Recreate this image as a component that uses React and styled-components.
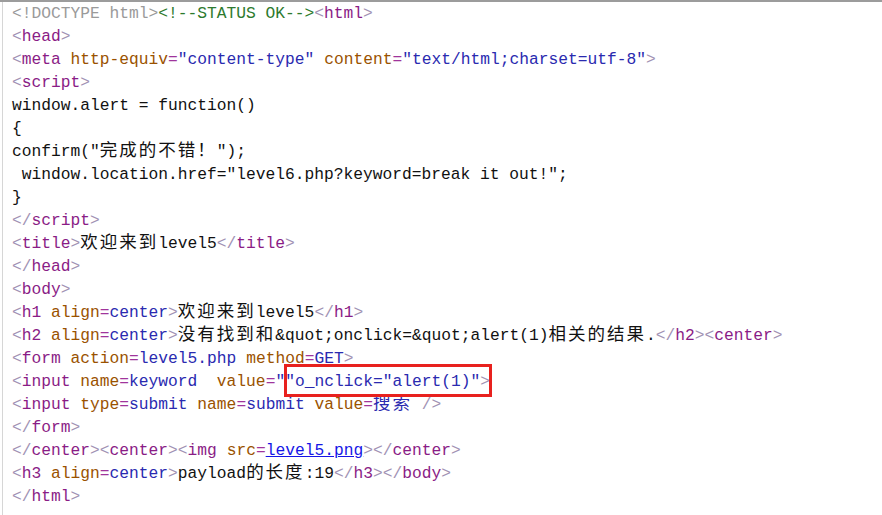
import React from 'react'
import styled, { createGlobalStyle } from 'styled-components'

const Global = createGlobalStyle`
  html, body {
    margin: 0;
    padding: 0;
    background: #ffffff;
  }
`

const colors = {
  d: '#9a9a9a',
  c: '#2d7a2d',
  b: '#a192b4',
  t: '#8a1c86',
  a: '#9a5200',
  e: '#a0349c',
  v: '#2a2ab0',
  x: '#111111',
  l: '#1515e6'
}

const Page = styled.div`
  border-top: 2px solid #9c9c9c;
  min-height: 513px;
  box-sizing: border-box;
  padding-left: 2px;
`

const Source = styled.pre`
  margin: 0;
  padding: 0 0 0 9px;
  border-left: 1px solid #d6d6d6;
  min-height: 513px;
  box-sizing: border-box;
  font-family: "Liberation Mono", "Noto Sans CJK SC", monospace;
  font-size: 16.25px;
  line-height: 23px;
  white-space: pre;
  color: #111;
`

const Line = styled.div`
  height: 23px;
`

const Tok = styled.span`
  color: ${p => colors[p.$k]};
  text-decoration: ${p => (p.$k === 'l' ? 'underline' : 'none')};
`

const Cjk = styled.span`
  font-size: 17.5px;
  letter-spacing: 2px;
`

const Mark = styled.span`
  position: relative;
  display: inline-block;
  height: 23px;

  &::after {
    content: '';
    position: absolute;
    left: -1px;
    right: -2px;
    top: -6px;
    bottom: -4px;
    border: 3px solid #e8211e;
  }
`

const splitCjk = (text) =>
  text.split(/([\u3000-\u9fff\uff00-\uffef]+)/).map((part, i) =>
    /[\u3000-\u9fff\uff00-\uffef]/.test(part) ? <Cjk key={i}>{part}</Cjk> : part
  )

// open / close tag helpers
const open = (name) => [['b', '<'], ['t', name], ['b', '>']]
const close = (name) => [['b', '</'], ['t', name], ['b', '>']]

const lines = [
  [['d', '<!DOCTYPE html>'], ['c', '<!--STATUS OK-->'], ...open('html')],
  open('head'),
  [
    ['b', '<'], ['t', 'meta'], ['x', ' '], ['a', 'http-equiv'], ['e', '='], ['v', '"content-type"'],
    ['x', ' '], ['a', 'content'], ['e', '='], ['v', '"text/html;charset=utf-8"'], ['b', '>']
  ],
  open('script'),
  [['x', 'window.alert = function()']],
  [['x', '{']],
  [['x', 'confirm("完成的不错！");']],
  [['x', ' window.location.href="level6.php?keyword=break it out!";']],
  [['x', '}']],
  close('script'),
  [...open('title'), ['x', '欢迎来到level5'], ...close('title')],
  close('head'),
  open('body'),
  [['b', '<'], ['t', 'h1'], ['x', ' '], ['a', 'align'], ['e', '='], ['v', 'center'], ['b', '>'],
    ['x', '欢迎来到level5'], ...close('h1')],
  [['b', '<'], ['t', 'h2'], ['x', ' '], ['a', 'align'], ['e', '='], ['v', 'center'], ['b', '>'],
    ['x', '没有找到和&quot;onclick=&quot;alert(1)相关的结果.'], ...close('h2'), ...open('center')],
  [['b', '<'], ['t', 'form'], ['x', ' '], ['a', 'action'], ['e', '='], ['v', 'level5.php'],
    ['x', ' '], ['a', 'method'], ['e', '='], ['v', 'GET'], ['b', '>']],
  [['b', '<'], ['t', 'input'], ['x', ' '], ['a', 'name'], ['e', '='], ['v', 'keyword'],
    ['x', '  '], ['a', 'value'], ['e', '='], ['v', '"'], ['mark', '']],
  [['b', '<'], ['t', 'input'], ['x', ' '], ['a', 'type'], ['e', '='], ['v', 'submit'],
    ['x', ' '], ['a', 'name'], ['e', '='], ['v', 'submit'], ['x', ' '], ['a', 'value'], ['e', '='],
    ['v', '搜索'], ['x', ' '], ['b', '/>']],
  close('form'),
  [...close('center'), ...open('center'), ['b', '<'], ['t', 'img'], ['x', ' '], ['a', 'src'], ['e', '='],
    ['l', 'level5.png'], ['b', '>'], ...close('center')],
  [['b', '<'], ['t', 'h3'], ['x', ' '], ['a', 'align'], ['e', '='], ['v', 'center'], ['b', '>'],
    ['x', 'payload的长度:19'], ...close('h3'), ...close('body')],
  close('html')
]

function App() {
  return (
    <Page>
      <Global />
      <Source>
        {lines.map((toks, i) => (
          <Line key={i}>
            {toks.map(([k, text], j) =>
              k === 'mark' ? (
                <Mark key={j}>
                  <Tok $k="v">"o_nclick="alert(1)"</Tok>
                  <Tok $k="b">&gt;</Tok>
                </Mark>
              ) : (
                <Tok key={j} $k={k}>{splitCjk(text)}</Tok>
              )
            )}
          </Line>
        ))}
      </Source>
    </Page>
  )
}

export default App
